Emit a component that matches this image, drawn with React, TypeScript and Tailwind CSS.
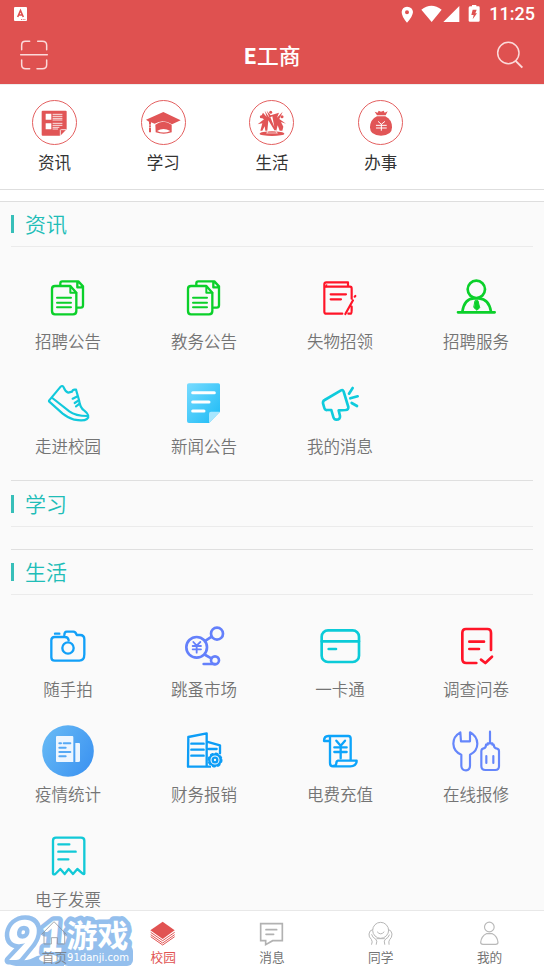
import type { ReactNode } from "react";

type Item = { label: string; box: string; color: string; art: ReactNode };

const sans = "font-['Noto_Sans_CJK_SC',sans-serif]";
const roboto = "font-['Roboto','Noto_Sans_CJK_SC',sans-serif]";

const documents = (
  <g strokeWidth="7">
    <path d="M181 75V70Q181 64 187 64H235L249 79V136Q249 143 242 143H233M232 66V82H249" />
    <path d="M165 78H211L229 98V153Q229 163 219 163H165Q156 163 156 153V87Q156 78 165 78Z" />
    <path d="M211 79V98H229M171 113H213M171 128H213M171 142H213" strokeWidth="6" />
  </g>
);

const news: Item[] = [
  { label: "招聘公告", box: "126 36 156 156", color: "text-[#0bd02a]", art: documents },
  { label: "教务公告", box: "126 36 156 156", color: "text-[#0bd02a]", art: documents },
  {
    label: "失物招领", box: "126 36 156 156", color: "text-[#ff1528]",
    art: (
      <g strokeWidth="6.5">
        <path d="M157 80V73Q157 67 163 67H228V80M157 80H234Q239 80 239 86V116M157 80V155Q157 161 163 161H211M229 161H237Q239 160 239 151V140M176 103H222M176 118H207M220 162L243 121M248 110L250 108" />
        <path d="M158 81L165 72V80Z" fill="currentColor" strokeWidth="1" />
      </g>
    ),
  },
  {
    label: "招聘服务", box: "534 36 156 156", color: "text-[#0bd02a]",
    art: (
      <g strokeWidth="8">
        <circle cx="613" cy="88" r="26" />
        <path d="M558 157H668M571 155Q577 116 606 115H621Q651 117 657 155" />
        <path d="M610 122H618L623 143L615 151L606 143Z" fill="currentColor" strokeWidth="3" />
      </g>
    ),
  },
  {
    label: "走进校园", box: "126 351 156 156", color: "text-[#12c9dc]",
    art: (
      <g strokeWidth="6.5">
        <path d="M147 422L182 380Q187 375 191 382Q196 395 205 398L216 395Q218 387 228 389L237 420Q240 444 253 452Q272 467 261 477Q251 484 223 479Q201 472 188 461L147 424M157 414L208 454Q227 468 262 468" />
        <path d="M218 416L230 410M224 429L236 421M228 439L239 431" />
      </g>
    ),
  },
  {
    label: "新闻公告", box: "534 351 156 156", color: "text-white",
    art: (
      <g>
        <defs><linearGradient id="note" x1="0" y1="0" x2="1" y2="1"><stop stopColor="#78dbff" /><stop offset="1" stopColor="#1abaf5" /></linearGradient></defs>
        <path d="M567 370H655Q660 370 660 375V455L627 489H567Q561 489 561 483V375Q561 370 567 370Z" fill="url(#note)" stroke="none" />
        <path d="M627 489V461Q627 455 633 455H660Z" fill="#a8e7ff" stroke="none" />
        <path d="M578 398H643M578 426H627M578 453H612" strokeWidth="9" />
      </g>
    ),
  },
  {
    label: "我的消息", box: "126 351 156 156", color: "text-[#0fcbdc]",
    art: (
      <path strokeWidth="8" d="M158 420L207 391Q213 388 215 395L229 441Q230 449 221 450L200 451L204 468Q205 479 193 479Q186 479 184 471L178 450H165Q159 451 157 444L153 430Q152 423 158 420ZM231 401L242 384M235 415L257 409M239 429L255 438" />
    ),
  },
];

const life: Item[] = [
  {
    label: "随手拍", box: "126 30 156 156", color: "text-[#12a0f8]",
    art: (
      <g strokeWidth="7">
        <circle cx="204" cy="114" r="17" />
        <path d="M165 71H178M193 76Q193 65 200 65H220Q227 65 230 75H240Q253 75 253 88V133Q253 152 238 152H164Q154 152 154 142V91Q154 81 164 81H193Q204 80 206 91" />
      </g>
    ),
  },
  {
    label: "跳蚤市场", box: "534 30 156 156", color: "text-[#6480fb]",
    art: (
      <g strokeWidth="8">
        <circle cx="590" cy="112" r="31" /><circle cx="651" cy="71" r="18" /><circle cx="645" cy="151" r="12" />
        <path d="M618 91L635 80M616 135L634 145M611 162H645" />
        <path d="M580 96L590 107L601 96M578 108H603M578 118H603M590 107V128" strokeWidth="5.5" />
      </g>
    ),
  },
  {
    label: "一卡通", box: "126 30 156 156", color: "text-[#0ccbd8]",
    art: (
      <g strokeWidth="8"><rect x="149" y="61" width="112" height="95" rx="19" /><path d="M149 94H261M170 117H192" /></g>
    ),
  },
  {
    label: "调查问卷", box: "534 30 156 156", color: "text-[#ff1528]",
    art: <path strokeWidth="8" d="M657 120V69Q657 57 646 57H582Q571 57 571 69V147Q571 159 583 159H613M592 95H636M592 117H621M627 149L640 159L660 140" />,
  },
  {
    label: "疫情统计", box: "126 345 156 156", color: "text-[#56a9f5]",
    art: (
      <g>
        <defs><linearGradient id="stats" x1="0" y1="0.2" x2="1" y2="0.8"><stop stopColor="#66b9f5" /><stop offset="1" stopColor="#3c93f1" /></linearGradient></defs>
        <circle cx="204" cy="423" r="77.5" fill="url(#stats)" stroke="none" />
        <path d="M168 381Q168 378 171 378H217Q220 378 220 382V456H171Q168 456 168 453ZM226 399H237Q240 399 240 403V452Q240 456 235 456H226Z" fill="#edf6ff" stroke="none" />
        <path d="M178 400H183M191 400H211M178 413H197M178 426H211M178 439H197" strokeWidth="6" />
      </g>
    ),
  },
  {
    label: "财务报销", box: "534 345 156 156", color: "text-[#0d9df6]",
    art: (
      <g strokeWidth="7">
        <path d="M565 381L620 370V470H564ZM620 395L660 406V430M574 401H611M574 419H611M574 437H611M626 417H650M620 470H630" />
        <circle cx="645" cy="450" r="17" /><circle cx="645" cy="450" r="7" />
        <circle cx="645" cy="450" r="19" strokeDasharray="5 10" />
      </g>
    ),
  },
  {
    label: "电费充值", box: "126 345 156 156", color: "text-[#0da4fa]",
    art: (
      <g strokeWidth="7">
        <path d="M174 393H156Q156 378 169 378H229Q236 378 236 386V451M174 382V459Q174 469 183 469H235Q254 468 254 452H198Q193 453 193 460Q192 468 184 468" />
        <path d="M193 392L206 407L219 392M187 412H224M187 426H224M206 408V445" />
      </g>
    ),
  },
  {
    label: "在线报修", box: "534 345 156 156", color: "text-[#6586fb]",
    art: (
      <g strokeWidth="6.5" transform="translate(0 1)">
        <path d="M565 366Q544 378 544 400Q545 424 568 433V467Q569 480 582 480Q594 479 594 466V433Q616 422 616 400Q615 377 594 366V393H567Z" />
        <path d="M654 364V399M642 403H647V399H661V403H665Q666 414 675 415Q681 416 681 423V468Q681 479 670 479H640Q628 479 628 467V423Q628 415 635 414Q642 413 642 403ZM643 437V458M664 437V458" />
      </g>
    ),
  },
  {
    label: "电子发票", box: "126 30 156 156", color: "text-[#12c9d7]",
    art: <path strokeWidth="7" d="M159 161V62Q159 53 168 53H243Q253 53 253 62V161Q252 164 248 161L232 147L219 162L206 147L194 162L181 147L166 162Q161 165 159 161ZM175 73H208M175 95H227M175 118H205" />,
  },
];

const quick: Item[] = [
  {
    label: "资讯", box: "94 46 138 138", color: "text-[#e15556]",
    art: (
      <g stroke="none">
        <path d="M129 78H198Q201 78 201 81V134L182 153H129Q126 153 126 150V81Q126 78 129 78Z" fill="currentColor" />
        <path d="M138 87H155V105H138ZM138 116H155V134H138Z" fill="white" />
        <path d="M160 89H187M160 95H187M160 101H187M160 106H187M160 116H187M160 122H187M160 128H178M160 133H174M182 153V137Q182 135 185 135H200" stroke="white" strokeWidth="2.5" />
      </g>
    ),
  },
  {
    label: "学习", box: "420 46 138 138", color: "text-[#e15556]",
    art: (
      <g fill="currentColor" stroke="none">
        <path d="M438 105L490 82L542 107L516 119Q490 101 464 117L453 113V143H447V111Z" />
        <path d="M466 120Q490 103 515 120V143Q491 151 467 143Z" />
        <path d="M471 139Q490 127 511 139Q491 148 471 139Z" fill="white" />
        <path d="M446 121H454M446 128H454" stroke="white" strokeWidth="2" />
      </g>
    ),
  },
  {
    label: "生活", box: "87 46 138 138", color: "text-[#e15556]",
    art: (
      <g fill="currentColor" stroke="none">
        <circle cx="152" cy="83" r="4.5" /><circle cx="124" cy="96" r="4.5" /><circle cx="186" cy="96" r="4.5" />
        <path d="M129 84L140 97L134 78L149 101L140 78L152 92L177 84L171 99L188 81L178 103L198 117L183 112L190 126L187 138H179L173 122L169 138H164L145 107L142 138H136L134 125L127 138H121L127 116L113 119L132 104L122 98Z" />
        <path d="M151 98L163 127L157 95ZM146 123L144 139H165Z" fill="white" />
        <ellipse cx="156" cy="147" rx="37" ry="7" />
        <path d="M141 145H171M145 137L141 145M166 137L171 145" stroke="white" strokeWidth="2" />
      </g>
    ),
  },
  {
    label: "办事", box: "413 46 138 138", color: "text-[#e15556]",
    art: (
      <g fill="currentColor" stroke="none">
        <path d="M463 81L472 84L475 78L482 81L490 78L493 84L502 80L496 92H470Z" />
        <path d="M470 95H495Q515 105 515 128Q515 153 482 153Q449 153 449 128Q450 104 470 95Z" />
        <path d="M474 111L483 119L493 111M468 122H498M468 130H498M483 119V137" fill="none" stroke="white" strokeWidth="3" />
      </g>
    ),
  },
];

const tabs: Item[] = [
  {
    label: "首页", box: "121 297 84 84", color: "text-[#878c94]",
    art: <path strokeWidth="3" d="M126 343L163 305L200 343M133 337V372H155V353H173V372H195V337" />,
  },
  {
    label: "校园", box: "27 57 84 84", color: "text-[#e15352]",
    art: (
      <g strokeWidth="3">
        <path d="M68 65L104 91L68 117L31 91Z" fill="currentColor" stroke="none" />
        <path d="M32 97L68 122L104 97M32 104L68 129L104 104M32 110L68 135L104 110" strokeLinecap="butt" />
      </g>
    ),
  },
  {
    label: "消息", box: "354 57 84 84", color: "text-[#b2b2b2]",
    art: <path strokeWidth="5" strokeLinejoin="miter" d="M362 71H427V122H398L377 134V122H362ZM378 89H410M378 103H401" />,
  },
  {
    label: "同学", box: "80 57 84 84", color: "text-[#b7b7b7]",
    art: (
      <g strokeWidth="3">
        <circle cx="121" cy="91" r="24" />
        <path d="M111 96Q121 108 131 96M96 89Q87 91 86 102Q85 111 93 118Q98 125 94 133M94 104Q97 114 106 117Q112 122 108 133M146 89Q154 92 155 102Q155 113 148 119Q144 124 146 133M147 105Q144 114 136 117Q129 121 133 133M110 116H132" />
      </g>
    ),
  },
  {
    label: "我的", box: "407 57 84 84", color: "text-[#b9b9b9]",
    art: <g strokeWidth="3.5"><circle cx="447" cy="81" r="14.5" /><path d="M438 101H456Q471 108 473 127Q473 133 466 133H428Q421 133 421 127Q423 108 438 101Z" /></g>,
  },
];

function Art({ item, size }: { item: Item; size: string }) {
  return (
    <svg viewBox={item.box} className={`${size} ${item.color} shrink-0`} fill="none" stroke="currentColor" strokeLinecap="round" strokeLinejoin="round">
      {item.art}
    </svg>
  );
}

function Heading({ children, height }: { children: ReactNode; height: string }) {
  return (
    <h2 className={`flex items-center ${height} border-b border-[#ebebeb] text-[21px] font-[350] leading-none text-[#20bdb7]`}>
      <span className="mr-[11px] h-[18px] w-[3px] bg-[#37bfb9]" />
      <span className="pb-px">{children}</span>
    </h2>
  );
}

function Grid({ items }: { items: Item[] }) {
  return (
    <div className="-mx-[11px] grid grid-cols-4 gap-y-[23px] pt-[25px]">
      {items.map((item) => (
        <div key={item.label} className="flex flex-col items-center">
          <Art item={item} size="size-[52px]" />
          <span className="mb-px mt-[5px] h-6 text-[16.5px] font-[350] leading-6 text-[#747474]">{item.label}</span>
        </div>
      ))}
    </div>
  );
}

function Watermark() {
  return (
    <svg viewBox="0 0 136 57" className="absolute left-0 top-0 h-[57px] w-[136px] overflow-visible" fill="white" stroke="none" strokeLinejoin="round">
      <rect x="62" y="34" width="71" height="21" rx="6" fill="#94bfed" />
      <path d="M10 44Q22 54 37 45L64 40V55Q36 55 16 55Q5 54 10 44Z" fill="#94bfed" />
      <g fontWeight="900" stroke="#94bfed" strokeWidth="9" paintOrder="stroke">
        <text x="10" y="49" fontSize="55" fontFamily="Lato, sans-serif" transform="skewX(-7)">9</text>
        <text x="42" y="41" fontSize="43" fontFamily="Lato, sans-serif" transform="skewX(-5)">1</text>
        <text x="66.5" y="35.5" fontSize="31" fontWeight="700" fontFamily="Noto Sans CJK SC, sans-serif">游戏</text>
      </g>
      <ellipse cx="49" cy="47.5" rx="10" ry="4" />
      <text x="67" y="50" fontSize="11" textLength="62" lengthAdjust="spacingAndGlyphs" fontFamily="DejaVu Sans, sans-serif">91danji.com</text>
    </svg>
  );
}

export default function App() {
  return (
    <div className={`flex h-[968px] w-[544px] flex-col overflow-hidden bg-[#fafafa] ${sans}`}>
      <header className="h-[84px] shrink-0 bg-[#df5150] text-white">
        <div className="flex h-7 items-center justify-between pl-[14px] pr-[9px]">
          <svg viewBox="0 0 13 14" className="h-[14px] w-[13px]">
            <rect width="13" height="14" rx="1" fill="white" />
            <path d="M3.7 10L6.5 3.5L9.3 10M4.8 8H8.2" fill="none" stroke="#df5150" strokeWidth="1.6" />
            <path d="M7 12.5H12" stroke="#df5150" strokeWidth=".8" strokeDasharray="1 .7" />
          </svg>
          <div className={`flex items-center ${roboto}`}>
            <svg viewBox="385 10 246 60" className="-mt-px h-5 w-[82px]" fill="white">
              <path fillRule="evenodd" d="M406 18Q423 19 424 34Q423 48 406 66Q390 48 390 34Q391 19 406 18ZM406 29A6 6 0 1 0 406 41A6 6 0 1 0 406 29Z" />
              <path d="M449 27Q479 4 510 27L480 64ZM563 16V64H515Z" />
              <path d="M597 17H601V13H614V17H621Q624 17 624 21V60Q624 63 620 63H595Q591 63 591 60V21Q591 17 597 17Z" />
              <path d="M603 27H615L611 38H616L603 56L606 43H599Z" fill="#df5150" />
            </svg>
            <span className="ml-[7px] text-[18px] font-medium leading-7">11:25</span>
          </div>
        </div>
        <div className="grid h-[54px] grid-cols-3 items-center px-[19px]">
          <svg viewBox="57 118 90 96" className="h-8 w-[30px]" fill="none" stroke="#fbdada" strokeWidth="4.5" strokeLinecap="round">
            <path d="M65 150V136Q65 125 76 125H89M113 125H127Q140 125 140 137V150M65 181V195Q65 207 77 207H89M111 207H127Q140 207 140 195V181M62 165H142" />
          </svg>
          <h1 className="text-center text-[21.8px] font-medium leading-none"><b>E</b>工商</h1>
          <svg viewBox="670 120 90 90" className="size-[30px] justify-self-end" fill="none" stroke="#fbdada" strokeWidth="4.5">
            <circle cx="710" cy="159" r="32" /><path d="M731 182L752 203" strokeWidth="6" />
          </svg>
        </div>
      </header>

      <nav className="grid h-[106px] shrink-0 grid-cols-5 border-b border-t border-b-[#dedede] border-t-[#eee] bg-white pt-[15px]">
        {quick.map((item) => (
          <div key={item.label} className="flex flex-col items-center">
            <span className="flex size-[45px] items-center justify-center rounded-full border-[1.5px] border-[#e46060]">
              <Art item={item} size="size-[46px]" />
            </span>
            <span className="mt-[5px] text-[16.5px] leading-6 text-[#333]">{item.label}</span>
          </div>
        ))}
      </nav>
      <div className="h-[12px] shrink-0 border-b border-[#dedede] bg-white" />

      <main className="min-h-0 flex-1 overflow-hidden px-[11px]">
        <section className="h-[278px]">
          <Heading height="h-[45px]">资讯</Heading>
          <Grid items={news} />
        </section>
        <section className="h-[69px] border-t border-[#dfdfdf]">
          <Heading height="h-[46px]">学习</Heading>
        </section>
        <section className="border-t border-[#dfdfdf]">
          <Heading height="h-[45px]">生活</Heading>
          <Grid items={life} />
        </section>
      </main>

      <footer className="relative h-[58px] shrink-0 border-t border-[#e8e8e8] bg-white">
        <Watermark />
        <div className="relative grid grid-cols-5 pt-2">
          {tabs.map((tab) => (
            <div key={tab.label} className={`flex flex-col items-center ${tab.label === "首页" ? "opacity-75" : ""}`}>
              <Art item={tab} size="size-7" />
              <span className={`-mt-px text-[12.7px] leading-[22px] ${tab.label === "校园" ? "text-[#e15352]" : "text-[#747474]"}`}>{tab.label}</span>
            </div>
          ))}
        </div>
      </footer>
    </div>
  );
}
